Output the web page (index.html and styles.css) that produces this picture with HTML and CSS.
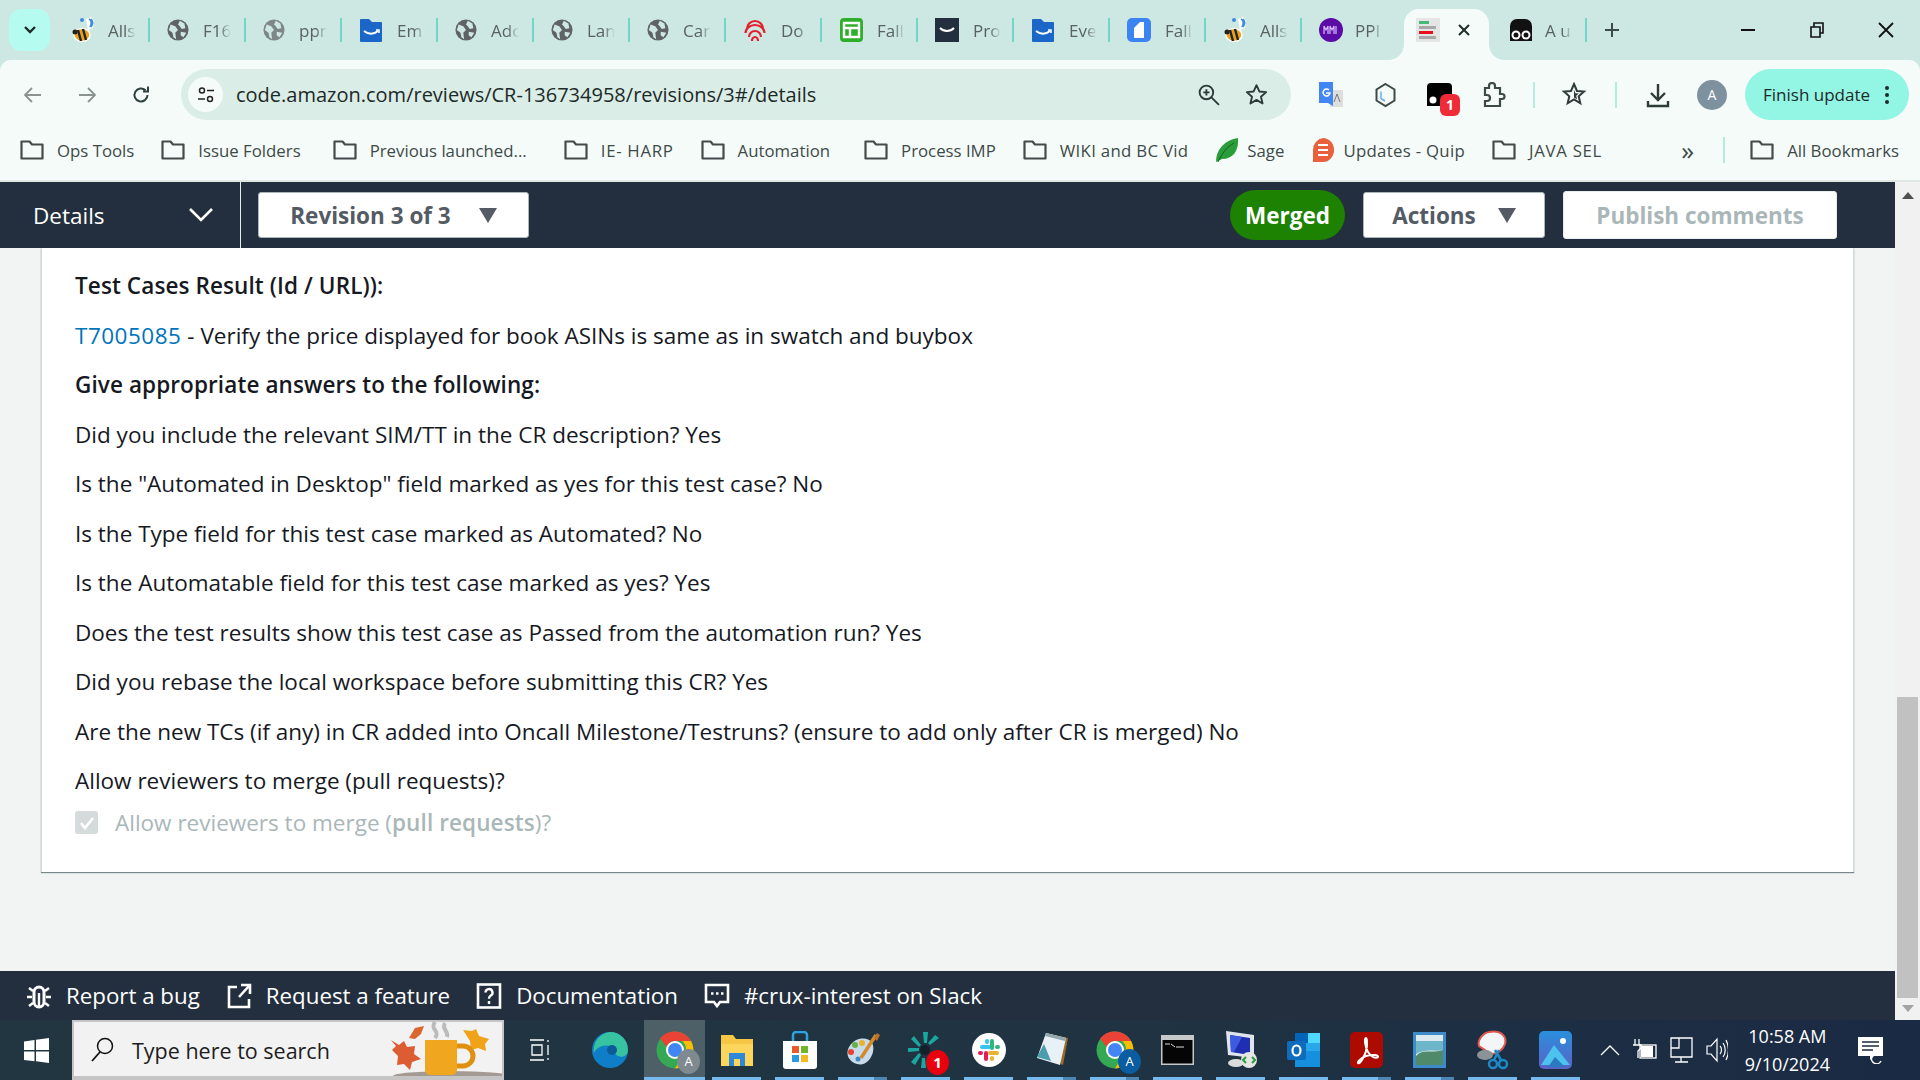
FILE: index.html
```html
<!DOCTYPE html>
<html lang="en">
<head>
<meta charset="utf-8">
<title>CR-136734958</title>
<link rel="stylesheet" href="styles.css">
</head>
<body>
<svg class="defs" width="0" height="0" aria-hidden="true">
  <defs>
    <symbol id="globe" viewBox="0 0 24 24"><circle cx="12" cy="12" r="11.500" fill="#5f6368"/><path d="M4 6l5 2 3 4-3 3 1 7-3-2-1-5-4-3zM14 2l5 3 1 5-4 1-2-3-2-2zM15 14l6 1-3 5-3-2z" fill="#cde8e2"/></symbol>
    <symbol id="folder" viewBox="0 0 24 22"><path d="M1.500 2.500h8l2.500 3h10.500v14H1.500z" fill="none" stroke="#444b4a" stroke-width="2.200" stroke-linejoin="round"/></symbol>
    <symbol id="bee" viewBox="0 0 26 28"><path d="M15 3l5-2 3 4-1 7-5 2z" fill="#fff"/><path d="M18 3c2 1 3 4 1 8M20 3c2 2 2 5 0 8" stroke="#3e8de0" stroke-width="1.600" fill="none"/><circle cx="11" cy="4" r="2" fill="#3e8de0"/><ellipse cx="11" cy="19" rx="8" ry="6.500" fill="#e8a51c" stroke="#fff" stroke-width="1.500"/><path d="M7 14l3 11M12 13l3 11" stroke="#222" stroke-width="2.400"/><circle cx="4" cy="16" r="2.500" fill="#222"/></symbol>
    <symbol id="box" viewBox="0 0 24 24"><path d="M1 2a1 1 0 0 1 1-1h8l3 3h9a1 1 0 0 1 1 1v18a1 1 0 0 1-1 1H2a1 1 0 0 1-1-1z" fill="#1a66c9"/><path d="M5 13c4 3.500 10 3.500 14 0" fill="none" stroke="#fff" stroke-width="2"/><path d="M17 12h3v3" fill="none" stroke="#fff" stroke-width="1.500"/></symbol>
    <symbol id="chrome" viewBox="0 0 38 38"><circle cx="19" cy="19" r="18.500" fill="#34a853"/><path d="M19 .5A18.500 18.500 0 0 1 35 10H19a9 9 0 0 0-8.500 6L4 7.500A18.500 18.500 0 0 1 19 .5z" fill="#ea4335"/><path d="M35 10a18.500 18.500 0 0 1-16 27.500L27 24a9 9 0 0 0-1-14z" fill="#fbbc04"/><circle cx="19" cy="19" r="9" fill="#fff"/><circle cx="19" cy="19" r="7" fill="#4285f4"/></symbol>
  </defs>
</svg>

<div class="browser">
  <div class="tabstrip">
    <button class="tabsearch"><svg width="14" height="10" viewBox="0 0 14 10"><path d="M2 2l5 5 5-5" fill="none" stroke="#1d2b2a" stroke-width="2.400"/></svg></button>
    <div class="tab"><svg class="fav" width="26" height="28"><use href="#bee"/></svg><span class="tabtext tabtext-bee">Alls</span></div>
    <div class="tab"><svg class="fav" width="22" height="22"><use href="#globe"/></svg><span class="tabtext">F16</span></div>
    <div class="tab"><svg class="fav faded" width="22" height="22"><use href="#globe"/></svg><span class="tabtext">ppr</span></div>
    <div class="tab"><svg class="fav" width="24" height="24"><use href="#box"/></svg><span class="tabtext">Em</span></div>
    <div class="tab"><svg class="fav" width="22" height="22"><use href="#globe"/></svg><span class="tabtext">Adc</span></div>
    <div class="tab"><svg class="fav" width="22" height="22"><use href="#globe"/></svg><span class="tabtext">Lan</span></div>
    <div class="tab"><svg class="fav" width="22" height="22"><use href="#globe"/></svg><span class="tabtext">Car</span></div>
    <div class="tab"><svg class="fav" width="24" height="24" viewBox="0 0 24 24"><path d="M4 11a8 8 0 0 1 16 0M2.500 15a9.500 8 0 0 1 19 0M6 19a6 6 0 0 1 12 0M9 23a3 4 0 0 1 6 0" fill="none" stroke="#e4202c" stroke-width="2.200"/></svg><span class="tabtext">Do</span></div>
    <div class="tab"><svg class="fav" width="24" height="24" viewBox="0 0 24 24"><rect x="1" width="23" height="24" rx="4" fill="#2eae2b"/><path d="M5 5h15v14H5zM5 10h15M11 10v9" fill="none" stroke="#fff" stroke-width="2.400"/></svg><span class="tabtext">Fall</span></div>
    <div class="tab"><svg class="fav" width="24" height="24" viewBox="0 0 24 24"><rect width="24" height="24" fill="#232f3e"/><path d="M5 10c4 4 10 4 14 0" fill="none" stroke="#fff" stroke-width="2"/></svg><span class="tabtext">Pro</span></div>
    <div class="tab"><svg class="fav" width="24" height="24"><use href="#box"/></svg><span class="tabtext">Eve</span></div>
    <div class="tab"><svg class="fav" width="24" height="24" viewBox="0 0 24 24"><rect width="24" height="24" rx="5" fill="#3d84f3"/><path d="M7 10l6-6h4v16H7z" fill="#fff"/></svg><span class="tabtext">Fall</span></div>
    <div class="tab"><svg class="fav" width="26" height="28"><use href="#bee"/></svg><span class="tabtext tabtext-bee">Alls</span></div>
    <div class="tab tab-ppi"><svg class="fav" width="24" height="24" viewBox="0 0 24 24"><circle cx="12" cy="12" r="12" fill="#5a0ca5"/><path d="M5 16V8l2 4 2-4v8M11 16V8l2 4 2-4v8M17 8v8" fill="none" stroke="#d9b8ff" stroke-width="1.200"/></svg><span class="tabtext">PPI</span></div>
    <div class="tab-active"><svg width="24" height="24" viewBox="0 0 24 24"><rect width="24" height="24" fill="#e4e6e5"/><rect x="3" y="3" width="10" height="3" fill="#46b978"/><rect x="3" y="8" width="17" height="3" fill="#a7a9a9"/><rect x="3" y="13" width="14" height="3" fill="#e8101c"/><rect x="3" y="18" width="17" height="3" fill="#a7a9a9"/></svg><svg class="close" width="14" height="14" viewBox="0 0 14 14"><path d="M2 2l10 10M12 2L2 12" stroke="#1d2b2a" stroke-width="2"/></svg></div>
    <div class="tab tab-last"><svg class="fav" width="24" height="24" viewBox="0 0 24 24"><path d="M1 8a7 7 0 0 1 7-7h8a7 7 0 0 1 7 7v15H1z" fill="#111"/><circle cx="7" cy="17" r="4.500" fill="#fff"/><circle cx="17" cy="17" r="4.500" fill="#fff"/><circle cx="7" cy="17" r="2.500" fill="#111"/><circle cx="17" cy="17" r="2.500" fill="#111"/></svg><span class="tabtext">A u</span></div>
    <svg class="newtab" width="16" height="16" viewBox="0 0 16 16"><path d="M8 1v14M1 8h14" stroke="#3d4a48" stroke-width="2"/></svg>
    <div class="wincontrols">
      <svg width="16" height="14" viewBox="0 0 16 14"><path d="M1 7h14" stroke="#111" stroke-width="2"/></svg>
      <svg width="16" height="16" viewBox="0 0 16 16"><path d="M2 5h9v10H2zM5 5V1h9v10h-3" fill="none" stroke="#111" stroke-width="1.600"/></svg>
      <svg width="16" height="16" viewBox="0 0 16 16"><path d="M1 1l14 14M15 1L1 15" stroke="#111" stroke-width="1.800"/></svg>
    </div>
  </div>

  <div class="chrome-panel">
    <div class="toolbar">
      <svg class="navicon" width="20" height="20" viewBox="0 0 20 20"><path d="M18 10H3M9 3l-7 7 7 7" fill="none" stroke="#8a9391" stroke-width="1.800"/></svg>
      <svg class="navicon" width="20" height="20" viewBox="0 0 20 20"><path d="M2 10h15M11 3l7 7-7 7" fill="none" stroke="#8a9391" stroke-width="1.800"/></svg>
      <svg class="navicon navicon-last" width="20" height="20" viewBox="0 0 20 20"><path d="M16.500 10a6.500 6.500 0 1 1-2-4.700M17 1.500v5h-5" fill="none" stroke="#2f4240" stroke-width="2"/></svg>
      <div class="omnibox">
        <span class="sitebtn"><svg width="18" height="18" viewBox="0 0 18 18"><circle cx="5" cy="4.500" r="2.500" fill="none" stroke="#222" stroke-width="1.500"/><path d="M10 4.500h7M1 13h7" stroke="#222" stroke-width="1.500"/><circle cx="13" cy="13" r="2.500" fill="none" stroke="#222" stroke-width="1.500"/></svg></span>
        <span class="url">code.amazon.com/reviews/CR-136734958/revisions/3#/details</span>
        <svg class="omniicon" width="23" height="23" viewBox="0 0 22 22"><circle cx="9" cy="9" r="6.500" fill="none" stroke="#2d3b39" stroke-width="1.800"/><path d="M14 14l7 7M9 6v6M6 9h6" stroke="#2d3b39" stroke-width="1.800"/></svg>
        <svg class="omniicon" width="25" height="25" viewBox="0 0 24 24"><path d="M12 3l2.700 6.100 6.600.6-5 4.400 1.500 6.500L12 17.200l-5.800 3.400 1.500-6.500-5-4.400 6.600-.6z" fill="none" stroke="#2d3b39" stroke-width="1.800" stroke-linejoin="round"/></svg>
      </div>
      <div class="extensions">
        <svg width="26" height="28" viewBox="0 0 26 28"><rect x="12" y="9" width="13" height="17" fill="#dcdfde"/><path d="M1 1h14v24l-5-3H1z" fill="#4285f4"/><path d="M11 9a3.500 3.500 0 1 0 1 3H8" fill="none" stroke="#fff" stroke-width="1.500"/><path d="M19 13l-3 8m3-8l3 8" stroke="#777" fill="none"/></svg>
        <svg width="23" height="26" viewBox="0 0 23 26"><path d="M11.500 2l9 5.500v11l-9 5.500-9-5.500v-11z" fill="none" stroke="#3d4a48" stroke-width="2"/><path d="M7 9.500v7l4 2.500" fill="none" stroke="#6ab0e8" stroke-width="1.500"/></svg>
        <span class="ext-badge"><svg width="25" height="26" viewBox="0 0 25 26"><path d="M0 5a4 4 0 0 1 4-4h17a4 4 0 0 1 4 4v19H0z" fill="#000"/><circle cx="6" cy="18" r="3.500" fill="#fff"/></svg><b class="badge">1</b></span>
        <svg width="24" height="26" viewBox="0 0 24 26"><path d="M3 6h4V4a3 3 0 0 1 6 0v2h5v6h2a2.500 2.500 0 0 1 0 5h-2v7H3v-5h2a3 3 0 0 0 0-6H3z" fill="none" stroke="#3d4a48" stroke-width="2.200"/></svg>
      </div>
      <i class="vsep vsep-a"></i>
      <svg class="tool-star" width="26" height="26" viewBox="0 0 26 26"><path d="M13 2l3 7 7 .6-5.300 4.700 1.600 7L13 17.500 6.700 21.300l1.600-7L3 9.600 10 9z" fill="none" stroke="#2d3b39" stroke-width="2"/><path d="M13 8l1.400 3.200 3.400.3-2.600 2.300.8 3.400-3-1.800z" fill="#2d3b39"/></svg>
      <i class="vsep vsep-b"></i>
      <svg class="tool-dl" width="26" height="26" viewBox="0 0 26 26"><path d="M13 2v15M6 11l7 7 7-7M3 19v5h20v-5" fill="none" stroke="#2d3b39" stroke-width="2.400"/></svg>
      <span class="avatar">A</span>
      <span class="finish">Finish update<svg width="6" height="20" viewBox="0 0 6 20"><circle cx="3" cy="3" r="2" fill="#1d2b2a"/><circle cx="3" cy="10" r="2" fill="#1d2b2a"/><circle cx="3" cy="17" r="2" fill="#1d2b2a"/></svg></span>
    </div>
    <div class="bookmarks">
      <span class="bm"><svg width="24" height="22"><use href="#folder"/></svg>Ops Tools</span>
      <span class="bm"><svg width="24" height="22"><use href="#folder"/></svg>Issue Folders</span>
      <span class="bm"><svg width="24" height="22"><use href="#folder"/></svg>Previous launched...</span>
      <span class="bm bm-wide"><svg width="24" height="22"><use href="#folder"/></svg>IE- HARP</span>
      <span class="bm"><svg width="24" height="22"><use href="#folder"/></svg>Automation</span>
      <span class="bm"><svg width="24" height="22"><use href="#folder"/></svg>Process IMP</span>
      <span class="bm bm-loose"><svg width="24" height="22"><use href="#folder"/></svg>WIKI and BC Vid</span>
      <span class="bm bm-app"><svg width="24" height="26" viewBox="0 0 24 26"><path d="M1 25C1 12 10 3 23 1c1 13-5 21-16 21z" fill="#2a9d3a"/><path d="M3 25C7 16 12 10 19 6" stroke="#15601f" fill="none"/></svg>Sage</span>
      <span class="bm bm-app bm-loose"><svg width="24" height="26" viewBox="0 0 24 26"><path d="M12 1a11 12 0 1 1 0 24H2V13A11 12 0 0 1 12 1z" fill="#e8613c"/><path d="M7 8h10M7 13h10M7 18h10" stroke="#fff" stroke-width="2"/></svg>Updates - Quip</span>
      <span class="bm bm-wide"><svg width="24" height="22"><use href="#folder"/></svg>JAVA SEL</span>
      <span class="bm-more">»</span>
      <i class="bm-sep"></i>
      <span class="bm bm-all"><svg width="24" height="22"><use href="#folder"/></svg>All Bookmarks</span>
    </div>
  </div>
</div>

<div class="page">
  <div class="main-col">
    <header class="appbar">
      <div class="details-toggle"><span>Details</span><svg width="26" height="16" viewBox="0 0 26 16"><path d="M2 2l11 11L24 2" fill="none" stroke="#fff" stroke-width="2.600"/></svg></div>
      <button class="revision">Revision 3 of 3<i class="caret"></i></button>
      <div class="appbar-right">
        <span class="merged">Merged</span>
        <button class="actions">Actions<i class="caret"></i></button>
        <button class="publish">Publish comments</button>
      </div>
    </header>
    <main class="content">
      <article class="card">
        <p><b>Test Cases Result (Id / URL)):</b></p>
        <p><a class="link">T7005085</a> - Verify the price displayed for book ASINs is same as in swatch and buybox</p>
        <p><b>Give appropriate answers to the following:</b></p>
        <p>Did you include the relevant SIM/TT in the CR description? Yes</p>
        <p>Is the "Automated in Desktop" field marked as yes for this test case? No</p>
        <p>Is the Type field for this test case marked as Automated? No</p>
        <p>Is the Automatable field for this test case marked as yes? Yes</p>
        <p>Does the test results show this test case as Passed from the automation run? Yes</p>
        <p>Did you rebase the local workspace before submitting this CR? Yes</p>
        <p>Are the new TCs (if any) in CR added into Oncall Milestone/Testruns? (ensure to add only after CR is merged) No</p>
        <p>Allow reviewers to merge (pull requests)?</p>
        <div class="checkline"><span class="check"><svg width="16" height="14" viewBox="0 0 16 14"><path d="M2 7l4 5 8-10" fill="none" stroke="#fff" stroke-width="2.600"/></svg></span><span>Allow reviewers to merge (<b>pull requests</b>)?</span></div>
      </article>
    </main>
    <footer class="appfooter">
      <span class="flink"><svg width="26" height="26" viewBox="0 0 26 26"><path d="M8 9a5 5 0 0 1 10 0v10a5 5 0 0 1-10 0z" fill="none" stroke="#fff" stroke-width="3"/><path d="M13 10v13M7 8L3 5M19 8l4-3M6 14H1M20 14h5M7 20l-4 3M19 20l4 3" stroke="#fff" stroke-width="2.400"/></svg>Report a bug</span>
      <span class="flink"><svg width="26" height="26" viewBox="0 0 26 26"><path d="M11 4H3v20h20v-8M13 14L23 3M15 2h9v9" fill="none" stroke="#fff" stroke-width="2.600"/></svg>Request a feature</span>
      <span class="flink"><svg width="26" height="26" viewBox="0 0 26 26"><rect x="2" y="1.500" width="22" height="23" fill="none" stroke="#fff" stroke-width="2.600"/><path d="M9.500 9.500a3.500 3.500 0 1 1 5 3.200c-1 .6-1.500 1.300-1.500 3M13 18v3" fill="none" stroke="#fff" stroke-width="2.400"/></svg>Documentation</span>
      <span class="flink"><svg width="26" height="26" viewBox="0 0 26 26"><path d="M2 2h22v17h-8l-3 4-3-4H2z" fill="none" stroke="#fff" stroke-width="2.600"/><path d="M7 10.500h2.500M12 10.500h2.500M17 10.500h2.500" stroke="#fff" stroke-width="2.400"/></svg>#crux-interest on Slack</span>
    </footer>
  </div>
  <aside class="scrollbar">
    <i class="arrow-up"></i>
    <div class="track"><div class="thumb"></div></div>
    <i class="arrow-down"></i>
  </aside>
</div>

<div class="taskbar">
  <div class="startbtn"><svg width="25" height="25" viewBox="0 0 25 25"><path d="M0 3.500l10.500-1.500v10H0zM12 1.800L25 0v12H12zM0 13.500h10.500v9.800L0 22zM12 13.500h13V25l-13-1.800z" fill="#fff"/></svg></div>
  <div class="searchbox">
    <svg width="26" height="26" viewBox="0 0 26 26"><circle cx="15" cy="10" r="7.500" fill="none" stroke="#111" stroke-width="1.500"/><path d="M10 16L2 25" stroke="#111" stroke-width="1.800"/></svg>
    <span class="searchtext">Type here to search</span>
    <svg class="mug" width="113" height="56" viewBox="0 0 113 56"><ellipse cx="62" cy="56" rx="58" ry="5" fill="#a39a94"/><path d="M2 20l8 5 5-4 3 6 8-1-1 8 7 5-9 3-2 8-6-6-7 1 1-9-6-6 4-4z" fill="#dd5d33"/><path d="M20 18l6-10 9-2-3 8-6 5z" fill="#d9662c"/><path d="M74 10l9 1 4-2 3 7 10 3-4 5 1 7-8-3-7 2-1-9z" fill="#f0a318"/><path d="M46 2c-6 8 6 8 0 16M56 3c-4 6 4 8 2 14" stroke="#bbb" stroke-width="4" fill="none"/><path d="M36 20h32v30a5 5 0 0 1-5 5H41a5 5 0 0 1-5-5z" fill="#f0a61e"/><path d="M68 26h6a8 8 0 0 1 0 20h-6" fill="none" stroke="#e09010" stroke-width="5"/></svg>
  </div>
  <div class="taskitems">
    <span class="ti ti-view"><svg width="24" height="24" viewBox="0 0 24 24"><path d="M2 2h14M2 22h14M4 7h10v10H4zM20 2v2M20 7v10M20 20v2" fill="none" stroke="#fff" stroke-width="1.300"/></svg></span>
    <span class="ti ti-edge"><svg width="38" height="38" viewBox="0 0 38 38"><circle cx="19" cy="19" r="18" fill="#0f7ec8"/><path d="M19 1a18 18 0 0 1 18 18c0 6-6 8-10 6-5-2-2-8-8-10C12 13 5 17 3 22A18 18 0 0 1 19 1z" fill="#37c3a0"/><circle cx="21" cy="19" r="5" fill="#0c5a98"/></svg></span>
    <span class="ti ti-on"><svg width="38" height="38"><use href="#chrome"/></svg><b class="sub sub-gray">A</b></span>
    <span class="ti ti-run"><svg width="34" height="36" viewBox="0 0 34 36"><path d="M1 3h12l3 4h17v27H1z" fill="#f6c644"/><path d="M1 12h32v22H1z" fill="#fcd65c"/><path d="M9 34V21h16v13h-5v-7h-6v7z" fill="#2d89d8"/></svg></span>
    <span class="ti ti-run"><svg width="36" height="38" viewBox="0 0 36 38"><path d="M1 10h34v25a3 3 0 0 1-3 3H4a3 3 0 0 1-3-3z" fill="#fff"/><path d="M11 10V4a3 3 0 0 1 3-3h8a3 3 0 0 1 3 3v6" fill="none" stroke="#2fa3dd" stroke-width="2.500"/><rect x="10" y="15" width="7" height="7" fill="#e95a2a"/><rect x="19" y="15" width="7" height="7" fill="#6fb72a"/><rect x="10" y="24" width="7" height="7" fill="#2a9be0"/><rect x="19" y="24" width="7" height="7" fill="#f8b822"/></svg></span>
    <span class="ti ti-run ti-multi"><svg width="36" height="36" viewBox="0 0 36 36"><path d="M14 7c10-2 16 3 14 13-2 8-8 14-16 12C4 30 0 22 4 15c2-4 6-7 10-8z" fill="#c9dbe8"/><circle cx="10" cy="13" r="3" fill="#6ab04a"/><circle cx="6" cy="20" r="3" fill="#e6432e"/><circle cx="17" cy="11" r="3" fill="#e6b42e"/><circle cx="13" cy="27" r="2.500" fill="#3a8ad0"/><path d="M16 26L31 3" stroke="#d48a2a" stroke-width="3.500"/><path d="M29 6l3-5 3 2-3 6z" fill="#b9742a"/></svg></span>
    <span class="ti ti-run"><svg width="38" height="38" viewBox="0 0 38 38"><g fill="#1aa7a0"><path d="M16 1h5l-1 11h-3z"/><path d="M28 4l4 3-9 7-2-2z"/><path d="M4 8l3-3 7 9-2 2z"/><path d="M1 17h11v3L1 21z"/><path d="M4 31l8-9 2 2-6 10z"/><path d="M15 27h3l1 10h-5z"/></g><circle cx="18" cy="19" r="5" fill="#15202b"/></svg><b class="sub sub-red">1</b></span>
    <span class="ti ti-run"><svg width="34" height="34" viewBox="0 0 34 34"><circle cx="17" cy="17" r="17" fill="#fff"/><rect x="8" y="12" width="11" height="4" rx="2" fill="#36c5f0"/><rect x="13" y="6" width="4" height="5" rx="2" fill="#36c5f0"/><rect x="18" y="6" width="4" height="11" rx="2" fill="#2eb67d"/><rect x="23" y="12" width="5" height="4" rx="2" fill="#2eb67d"/><rect x="16" y="18" width="11" height="4" rx="2" fill="#ecb22e"/><rect x="18" y="23" width="4" height="5" rx="2" fill="#ecb22e"/><rect x="12" y="18" width="4" height="10" rx="2" fill="#e01e5a"/><rect x="6" y="18" width="5" height="4" rx="2" fill="#e01e5a"/></svg></span>
    <span class="ti ti-run ti-multi"><svg width="34" height="36" viewBox="0 0 34 36"><path d="M11 1l22 5-5 27-2-1z" fill="#a06a2a"/><path d="M11 1l20 5-6 27-23-7z" fill="#e8f1f5"/><path d="M9 12l7 17-14-4z" fill="#4a9cae"/><path d="M11 1l20 5-1 3-20-5z" fill="#8fa8b0"/></svg></span>
    <span class="ti ti-run ti-multi"><svg width="38" height="38"><use href="#chrome"/></svg><b class="sub sub-blue">A</b></span>
    <span class="ti ti-run"><svg width="33" height="30" viewBox="0 0 33 30"><rect width="33" height="30" fill="#c6c9c9"/><rect x="1.500" y="5" width="30" height="23.500" fill="#050505"/><path d="M4 9h5M10 9l4 3M15 12h8" stroke="#ddd"/></svg></span>
    <span class="ti ti-run"><svg width="36" height="40" viewBox="0 0 36 40"><path d="M3 1l28 4v23L5 25z" fill="#dfe4ee"/><path d="M7 5l20 3v17L8 22z" fill="#1f2fb2"/><path d="M7 5l12 2-8 15H8z" fill="#3d5be0"/><ellipse cx="13" cy="33" rx="8" ry="4" fill="#dcdcdc"/><circle cx="26" cy="30" r="8" fill="#e4e7e4"/><path d="M23 27l-3 3 3 3M29 27l3 3-3 3" stroke="#2a9a3a" stroke-width="2" fill="none"/></svg></span>
    <span class="ti ti-run"><svg width="34" height="36" viewBox="0 0 34 36"><rect x="8" y="1" width="25" height="34" rx="2" fill="#28a8ea"/><rect x="8" y="1" width="13" height="10" fill="#0364b8"/><rect x="21" y="1" width="12" height="10" fill="#50d9ff"/><path d="M8 19l25 0v16H8z" fill="#1490df"/><rect x="0" y="9" width="19" height="19" rx="2" fill="#0f6cbd"/><ellipse cx="9.500" cy="18.500" rx="4" ry="5" fill="none" stroke="#fff" stroke-width="2.200"/></svg></span>
    <span class="ti ti-run ti-multi"><svg width="33" height="36" viewBox="0 0 33 36"><rect width="33" height="36" rx="5" fill="#ad0b00"/><path d="M16 6c-2 0-1 9 2 14 3 5 8 7 10 5 1-2-6-3-12-1-5 2-9 6-8 7 2 2 8-8 9-17 0-5 0-8-1-8z" fill="none" stroke="#fff" stroke-width="2"/></svg></span>
    <span class="ti ti-run ti-multi"><svg width="33" height="36" viewBox="0 0 33 36"><rect width="33" height="36" fill="#3f8ac9"/><rect x="3" y="3" width="27" height="30" fill="#ddeaf0"/><path d="M3 24c8-8 14-2 27-6v15H3z" fill="#4f8b6a"/><path d="M3 9h27v9c-10 2-17-2-27 4z" fill="#6db5c9"/></svg></span>
    <span class="ti ti-run"><svg width="35" height="40" viewBox="0 0 35 40"><path d="M14 2c12-2 18 4 16 12-2 6-8 10-14 10L4 16C2 10 8 3 14 2z" fill="#f4f5f6" stroke="#e0554f" stroke-width="2"/><ellipse cx="10" cy="25" rx="8" ry="5" fill="#8d9296"/><path d="M20 20l6 10M24 20l-5 10" stroke="#1c8ac8" stroke-width="2.500"/><circle cx="18" cy="34" r="4" fill="none" stroke="#1c8ac8" stroke-width="2.500"/><circle cx="28" cy="34" r="4" fill="none" stroke="#1c8ac8" stroke-width="2.500"/></svg></span>
    <span class="ti ti-run"><svg width="33" height="38" viewBox="0 0 33 38"><defs><linearGradient id="ph" x1="0" y1="0" x2="0" y2="1"><stop offset="0" stop-color="#2a8fdc"/><stop offset="1" stop-color="#5b62c8"/></linearGradient></defs><rect width="33" height="38" rx="5" fill="url(#ph)"/><circle cx="24" cy="10" r="3" fill="#fff"/><path d="M2 34L15 14l16 20z" fill="#4cc2ee"/><path d="M9 36l7-10 10 10z" fill="#2a7ac0"/></svg></span>
  </div>
  <div class="tray">
    <svg width="20" height="12" viewBox="0 0 20 12"><path d="M1 11l9-9 9 9" fill="none" stroke="#fff" stroke-width="1.300"/></svg>
    <svg width="24" height="24" viewBox="0 0 24 24"><path d="M2 1v6M6 1v6M0 7h8v3l-3 3v7" fill="none" stroke="#fff" stroke-width="1.300"/><rect x="7" y="7" width="16" height="13" fill="none" stroke="#fff" stroke-width="1.300"/><rect x="8" y="8" width="12" height="11" fill="#fff"/></svg>
    <svg width="23" height="28" viewBox="0 0 23 28"><path d="M1 2h21v19H1zM11 21v5M5 26h13M1 2h8v10H1" fill="none" stroke="#fff" stroke-width="1.300"/></svg>
    <svg width="22" height="26" viewBox="0 0 22 26"><path d="M1 9h4l6-7v22l-6-7H1zM14 9c2 2 2 6 0 8M17 6c3 4 3 10 0 14M20 3c3 6 3 14 0 20" fill="none" stroke="#fff" stroke-width="1.200"/></svg>
    <div class="clock"><span>10:58 AM</span><span>9/10/2024</span></div>
    <svg class="notif" width="25" height="27" viewBox="0 0 25 27"><path d="M0 0h25v19H16l-4 4v-4H0z" fill="#fff"/><path d="M4 5h17M4 9h17M4 13h11" stroke="#1b2b3d" stroke-width="1.400"/><path d="M20 17a5 5 0 1 0 3 7" fill="none" stroke="#fff" stroke-width="1.500"/></svg>
  </div>
</div>
</body>
</html>
```
FILE: styles.css
```css
* { box-sizing: border-box; }
html, body { margin: 0; padding: 0; width: 1920px; height: 1080px; overflow: hidden; }
body { font-family: "Open Sans", "Noto Sans", sans-serif; color: #16191f; display: flex; flex-direction: column; }
.defs { position: absolute; }
p { margin: 0; }
button { font-family: inherit; }

.browser { height: 182px; background: #cde8e2; flex: none; }
.tabstrip { height: 60px; display: flex; align-items: center; padding-left: 9px; }
.tabsearch { width: 41px; height: 42px; margin-right: 4px; border: 0; padding: 0; border-radius: 12px; background: #b6fbf0; display: flex; align-items: center; justify-content: center; flex: none; }
.tab { width: 96px; height: 24px; display: flex; align-items: center; gap: 14px; padding-left: 17px; border-right: 2px solid #74d6c8; flex: none; }
.tab-ppi { width: 102px; border-right: 0; gap: 12px; }
.tab-last { width: 98px; padding-left: 20px; gap: 12px; }
.fav { flex: none; }
.faded { opacity: .72; }
.tabtext { font-size: 17px; color: #59625f; width: 28px; flex: none; white-space: nowrap; -webkit-mask-image: linear-gradient(90deg, #000 60%, transparent 100%); mask-image: linear-gradient(90deg, #000 60%, transparent 100%); }
.tabtext-bee { margin-left: -3px; }
.tab-active { width: 85px; height: 51px; margin-top: 9px; background: #f5fbf8; border-radius: 15px 15px 0 0; display: flex; align-items: center; padding: 0 18px 9px 12px; justify-content: space-between; flex: none; position: relative; }
.tab-active::before, .tab-active::after { content: ""; position: absolute; bottom: 0; width: 15px; height: 15px; }
.tab-active::before { left: -15px; background: radial-gradient(circle at 0 0, transparent 14.500px, #f5fbf8 15px); }
.tab-active::after { right: -15px; background: radial-gradient(circle at 100% 0, transparent 14.500px, #f5fbf8 15px); }
.newtab { margin-left: 17px; flex: none; }
.wincontrols { margin-left: auto; display: flex; align-items: center; gap: 53px; padding-right: 26px; }

.chrome-panel { height: 122px; background: #f5fbf8; border-radius: 11px 11px 0 0; border-bottom: 2px solid #dfe8e5; position: relative; }
.toolbar { height: 60px; display: flex; align-items: center; padding: 9px 11px 0 23px; }
.navicon { flex: none; margin-right: 34px; }
.navicon-last { margin-right: 30px; }
.omnibox { width: 1110px; height: 51px; border-radius: 26px; background: #dbede7; display: flex; align-items: center; padding: 0 22px 0 7px; flex: none; }
.sitebtn { width: 35px; height: 35px; border-radius: 50%; background: #f5fbf8; display: flex; align-items: center; justify-content: center; margin-right: 13px; flex: none; }
.url { font-size: 20px; color: #1c2a28; flex: 1; white-space: nowrap; }
.omniicon { margin-left: 24px; flex: none; }
.extensions { display: flex; align-items: center; gap: 30px; margin-left: 27px; flex: none; }
.ext-badge { position: relative; display: flex; }
.badge { position: absolute; left: 13px; top: 12px; width: 20px; height: 22px; background: #ee2b37; color: #fff; border-radius: 6px; font-size: 14px; line-height: 22px; text-align: center; }
.vsep { width: 2px; height: 26px; background: #b4ece0; flex: none; }
.vsep-a { margin: 0 26px 0 27px; }
.vsep-b { margin: 0 28px; }
.tool-star { flex: none; }
.tool-dl { flex: none; margin-right: 26px; }
.avatar { width: 30px; height: 30px; border-radius: 50%; background: #7d919f; color: #fff; font-size: 14px; display: flex; align-items: center; justify-content: center; flex: none; margin-right: 18px; }
.finish { width: 164px; height: 51px; border-radius: 26px; background: #93f5e4; font-size: 17px; color: #1d2b2a; display: flex; align-items: center; justify-content: space-between; padding: 0 19px 0 18px; flex: none; white-space: nowrap; }

.bookmarks { height: 60px; display: flex; align-items: center; padding: 0 21px 0 20px; font-size: 16.800px; color: #3d4a48; }
.bm { display: flex; align-items: center; gap: 13px; margin-right: 27px; white-space: nowrap; flex: none; }
.bm:nth-child(2) { margin-right: 32px; }
.bm:nth-child(3) { margin-right: 37px; }
.bm:nth-child(5) { margin-right: 34px; }
.bm-wide { letter-spacing: .7px; }
.bm-loose { letter-spacing: .3px; }
.bm-app { gap: 8px; }
.bm-more { margin-left: auto; font-size: 26px; line-height: 26px; margin-right: 29px; color: #3d4a48; }
.bm-sep { width: 2px; height: 26px; background: #b4ece0; margin-right: 25px; flex: none; }
.bm-all { margin-right: 0; }

.page { flex: 1; display: flex; min-height: 0; }
.main-col { flex: 1; display: flex; flex-direction: column; min-width: 0; }
.appbar { height: 66px; background: #232f3e; display: flex; align-items: center; flex: none; }
.details-toggle { width: 241px; height: 66px; border-right: 1px solid #eaeded; padding: 0 26px 0 33px; display: flex; align-items: center; justify-content: space-between; color: #fff; font-size: 22.500px; flex: none; }
.revision { margin-left: 17px; width: 271px; height: 46px; border: 1px solid #aab7b8; border-radius: 3px; background: #fff; color: #545b64; font-size: 22.500px; font-weight: 700; display: flex; align-items: center; justify-content: center; gap: 28px; }
.caret { width: 0; height: 0; border-left: 9px solid transparent; border-right: 9px solid transparent; border-top: 15px solid #545b64; display: block; }
.appbar-right { margin-left: auto; display: flex; align-items: center; gap: 18px; padding-right: 58px; }
.merged { width: 115px; height: 50px; border-radius: 25px; background: #1d8102; color: #fff; font-size: 22.500px; font-weight: 700; display: flex; align-items: center; justify-content: center; }
.actions { width: 182px; height: 46px; border: 1px solid #aab7b8; border-radius: 3px; background: #fff; color: #545b64; font-size: 22.500px; font-weight: 700; display: flex; align-items: center; justify-content: center; gap: 22px; }
.publish { width: 274px; height: 48px; border: 1px solid #eaeded; border-radius: 3px; background: #fff; color: #aab7b8; font-size: 22.500px; font-weight: 700; }

.content { flex: 1; background: #f2f3f3; padding: 0 41px; min-height: 0; }
.card { background: #fff; height: 624px; border-right: 1px solid #d5dbdb; border-left: 1px solid #d5dbdb; box-shadow: 0 1px 1px 0 rgba(0,28,36,.5); padding: 13px 33px 0; font-size: 22.500px; line-height: 49.500px; display: flex; flex-direction: column; }
.card p { white-space: nowrap; height: 49.500px; flex: none; }
.card b { font-weight: 600; letter-spacing: .1px; }
.link { color: #0073bb; letter-spacing: .5px; }
.checkline { display: flex; align-items: center; gap: 17px; color: #aab7b8; height: 34px; white-space: nowrap; line-height: 34px; }
.check { width: 23px; height: 23px; background: #d5dbdb; border-radius: 3px; display: flex; align-items: center; justify-content: center; }

.appfooter { height: 49px; background: #232f3e; color: #fff; display: flex; align-items: center; gap: 26px; padding-left: 26px; font-size: 22.300px; flex: none; }
.flink { display: flex; align-items: center; gap: 14px; white-space: nowrap; }

.scrollbar { width: 25px; background: #f1f1f1; display: flex; flex-direction: column; align-items: center; flex: none; }
.arrow-up { width: 0; height: 0; border-left: 6px solid transparent; border-right: 6px solid transparent; border-bottom: 7px solid #505050; margin-top: 10px; flex: none; }
.track { flex: 1; width: 100%; padding: 0 2px; display: flex; align-items: flex-end; }
.thumb { width: 100%; height: 301px; background: #c1c1c1; margin-bottom: 7px; }
.arrow-down { width: 0; height: 0; border-left: 6px solid transparent; border-right: 6px solid transparent; border-top: 7px solid #a3a3a3; margin-bottom: 8px; flex: none; }

.taskbar { height: 60px; background: linear-gradient(90deg, #213640, #1f3342 60%, #1a2a44); display: flex; align-items: center; color: #fff; flex: none; }
.startbtn { width: 72px; display: flex; justify-content: center; flex: none; }
.searchbox { width: 432px; height: 60px; background: #f2f2f2; border: 2px solid #c5c5c5; border-bottom-width: 4px; display: flex; align-items: center; padding-left: 16px; color: #1d1d1d; position: relative; flex: none; }
.searchtext { font-size: 21.500px; margin-left: 16px; padding-top: 2px; }
.mug { position: absolute; right: 0; bottom: 0; }
.taskitems { display: flex; align-items: center; height: 60px; flex: none; }
.ti { width: 63px; height: 60px; display: flex; align-items: center; justify-content: center; position: relative; flex: none; }
.ti-view { width: 72px; }
.ti-edge { width: 68px; }
.ti-on { width: 61px; background: #4d6068; }
.ti::after { content: ""; position: absolute; left: 7px; right: 7px; bottom: 0; height: 3px; }
.ti-on::after { background: #76b9ed; left: 0; right: 0; }
.ti-run::after { background: #76b9ed; }
.ti-multi::after { background: linear-gradient(90deg, #76b9ed 36px, #4d86b4 36px); }
.sub { position: absolute; width: 23px; height: 25px; border-radius: 50%; font-size: 13px; text-align: center; line-height: 25px; font-weight: 400; }
.sub-gray { right: 5px; bottom: 6px; background: #7e8a90; }
.sub-blue { right: 5px; bottom: 6px; background: #0a5da0; }
.sub-red { right: 8px; bottom: 5px; background: #e8000f; font-size: 15px; font-weight: 700; }
.tray { margin-left: auto; display: flex; align-items: center; gap: 13px; padding-right: 37px; }
.clock { display: flex; flex-direction: column; align-items: center; font-size: 18px; line-height: 28px; margin: 0 15px 0 4px; }
.notif { flex: none; }
```
